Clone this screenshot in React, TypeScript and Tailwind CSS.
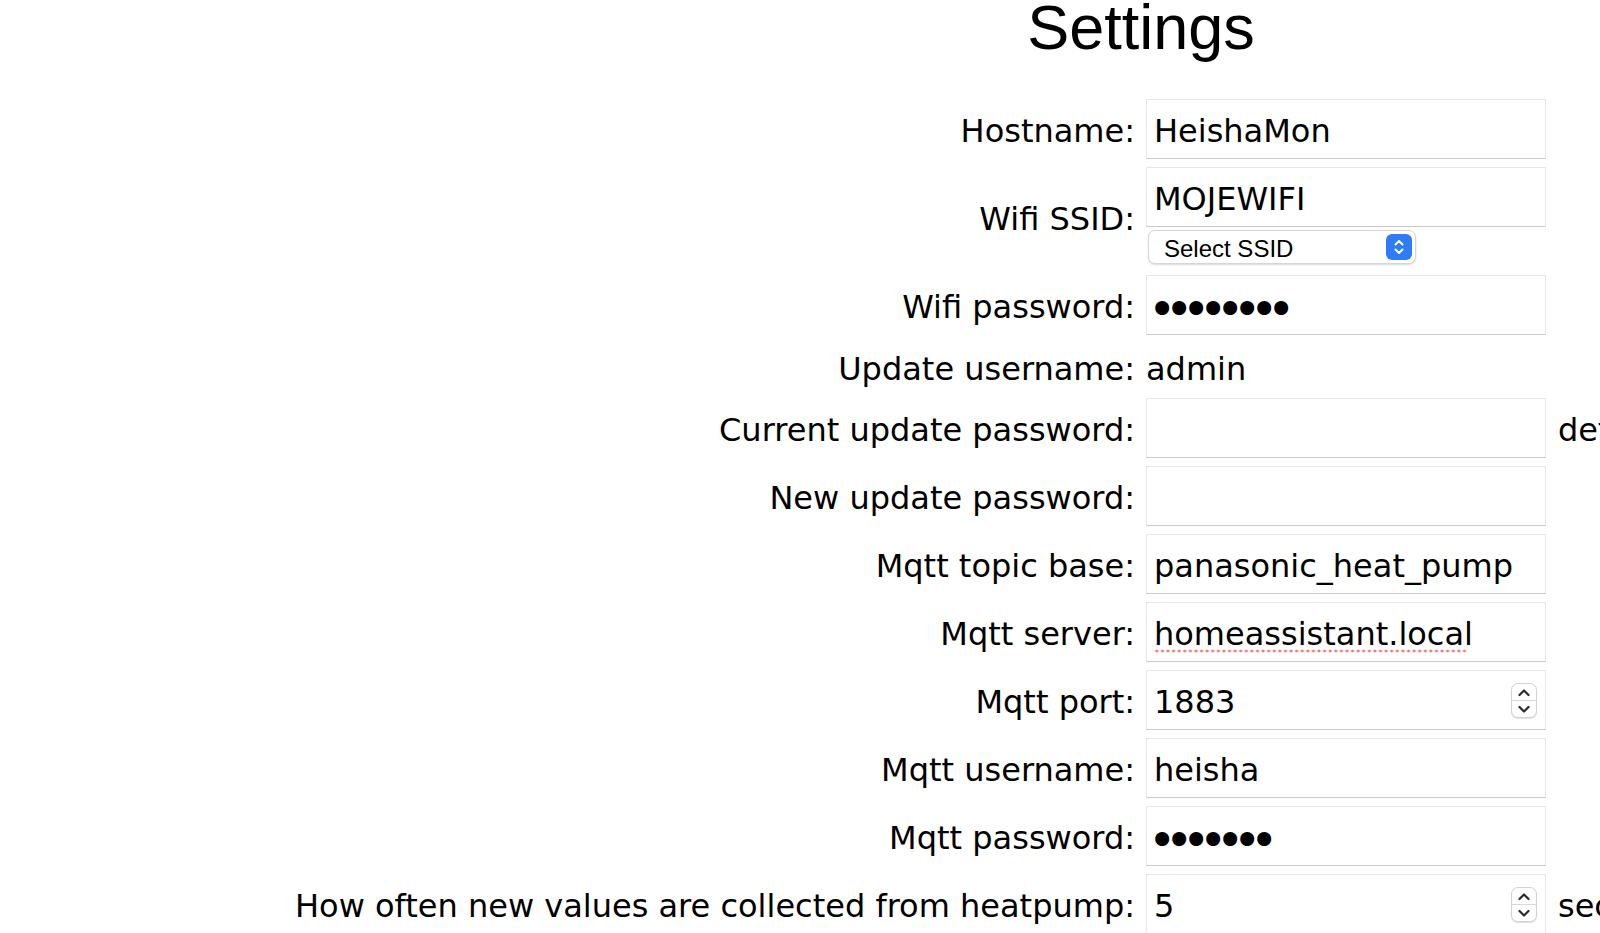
import { useState } from "react";

const font = "font-['DejaVu_Sans',Verdana,sans-serif]";

function Field({ type = "text", value }: { type?: string; value: string }) {
    const dots = type === "password" && value !== "";
    return (
        <input
            type={type}
            defaultValue={value}
            className={`block h-[60px] w-[400px] border border-[#e6e6e6] border-b-[#c9c9c9] bg-white pr-[7px] text-black outline-none ${font} ${dots ? "pl-[1px] pt-[8px] text-[48px] tracking-[-11.3px]" : "pl-[7px] pt-[4px] text-[32px]"}`}
        />
    );
}

function Spinner() {
    return (
        <div className="absolute left-[365px] top-[13px] flex h-[35px] w-[26px] flex-col rounded-[7px] border border-[#d2d2d2] bg-white shadow-[0_1px_1px_rgba(0,0,0,0.12)]">
            <div className="flex flex-1 items-center justify-center border-b border-[#d9d9d9]">
                <svg width="14" height="9" viewBox="0 0 14 9" fill="none">
                    <path d="M2.5 7 L7 2.5 L11.5 7" stroke="#2a2a2a" strokeWidth="2.2" strokeLinecap="round" strokeLinejoin="round" />
                </svg>
            </div>
            <div className="flex flex-1 items-center justify-center">
                <svg width="14" height="9" viewBox="0 0 14 9" fill="none">
                    <path d="M2.5 2 L7 6.5 L11.5 2" stroke="#2a2a2a" strokeWidth="2.2" strokeLinecap="round" strokeLinejoin="round" />
                </svg>
            </div>
        </div>
    );
}

function NumberField({ value }: { value: string }) {
    return (
        <div className="relative h-[60px] w-[400px]">
            <input
                type="text"
                inputMode="numeric"
                defaultValue={value}
                className={`block h-full w-full border border-[#e6e6e6] border-b-[#c9c9c9] bg-white px-[7px] pt-[4px] text-[32px] text-black outline-none ${font}`}
            />
            <Spinner />
        </div>
    );
}

function Label({ children }: { children: string }) {
    return <div className="flex items-center justify-end whitespace-nowrap pt-[4px]">{children}</div>;
}

export default function App() {
    const [ssid, setSsid] = useState("");

    return (
        <div className={`h-[933px] w-[1600px] overflow-hidden bg-white text-[32px] text-black ${font}`}>
            <div className="h-[90px] w-[2282px]">
                <h1 className="-mt-[4px] text-center font-['Liberation_Sans',Arial,sans-serif] text-[63px] leading-[63px]">
                    Settings
                </h1>
            </div>

            <div className="grid grid-cols-[1135px_400px_max-content] gap-x-[11px] gap-y-[8px] pt-[13px]">
                <Label>Hostname:</Label>
                <Field value="HeishaMon" />
                <div />

                <Label>Wifi SSID:</Label>
                <div className="flex h-[100px] flex-col">
                    <Field value="MOJEWIFI" />
                    <div className="relative ml-[2px] mt-[3px] h-[34px] w-[268px]">
                        <select
                            value={ssid}
                            onChange={(e) => setSsid(e.target.value)}
                            className="block h-full w-full appearance-none rounded-[7px] border border-[#d6d6d6] bg-white pl-[15px] font-['Liberation_Sans',Arial,sans-serif] text-[24px] text-black shadow-[0_1px_2px_rgba(0,0,0,0.15)] outline-none"
                        >
                            <option value="">Select SSID</option>
                            <option value="MOJEWIFI">MOJEWIFI</option>
                        </select>
                        <div className="pointer-events-none absolute right-[4px] top-[4px] flex h-[26px] w-[26px] flex-col items-center justify-center gap-[2px] rounded-[6px] bg-[#2f7df6]">
                            <svg width="12" height="7" viewBox="0 0 12 7" fill="none">
                                <path d="M2.5 5.5 L6 2 L9.5 5.5" stroke="white" strokeWidth="2" strokeLinecap="round" strokeLinejoin="round" />
                            </svg>
                            <svg width="12" height="7" viewBox="0 0 12 7" fill="none">
                                <path d="M2.5 1.5 L6 5 L9.5 1.5" stroke="white" strokeWidth="2" strokeLinecap="round" strokeLinejoin="round" />
                            </svg>
                        </div>
                    </div>
                </div>
                <div />

                <Label>Wifi password:</Label>
                <Field type="password" value="password" />
                <div />

                <div className="flex h-[47px] items-center justify-end whitespace-nowrap pt-[4px]">Update username:</div>
                <div className="flex h-[47px] items-center pt-[4px]">admin</div>
                <div />

                <Label>Current update password:</Label>
                <Field type="password" value="" />
                <div className="ml-[1px] flex items-center whitespace-nowrap pt-[4px]">default is 'heisha'</div>

                <Label>New update password:</Label>
                <Field type="password" value="" />
                <div />

                <Label>Mqtt topic base:</Label>
                <Field value="panasonic_heat_pump" />
                <div />

                <Label>Mqtt server:</Label>
                <div className="relative">
                    <Field value="homeassistant.local" />
                    <div className="pointer-events-none absolute left-[8px] top-[47px] h-[4px] w-[313px] bg-[radial-gradient(circle,#f07a7a_1.3px,transparent_1.7px)] bg-[length:5.6px_4px]" />
                </div>
                <div />

                <Label>Mqtt port:</Label>
                <NumberField value="1883" />
                <div />

                <Label>Mqtt username:</Label>
                <Field value="heisha" />
                <div />

                <Label>Mqtt password:</Label>
                <Field type="password" value="heisha1" />
                <div />

                <Label>How often new values are collected from heatpump:</Label>
                <NumberField value="5" />
                <div className="ml-[1px] flex items-center whitespace-nowrap pt-[4px]">seconds (default: 5)</div>
            </div>
        </div>
    );
}
